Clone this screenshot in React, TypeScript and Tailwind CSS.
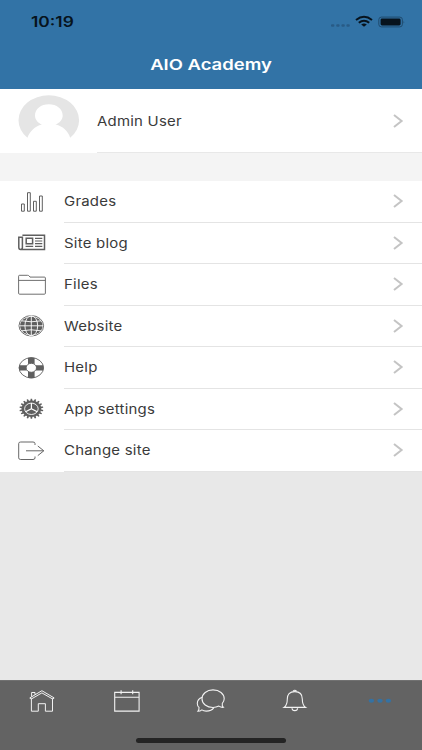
import type { ReactNode } from "react";

interface MenuItem {
  label: string;
  icon: ReactNode;
}

const labelCls =
  "inline-block origin-left scale-x-[1.15] whitespace-nowrap text-[13px] leading-5 " +
  "tracking-[0.2px] text-[#3a3a3a]";

const menuIconCls = "h-6 w-8 shrink-0 fill-none stroke-[#5f5f5f]";

const tabIconCls = "h-6 w-8 fill-none stroke-[#f2f2f2]";

const gearTeeth = Array.from({ length: 18 }, (_, i) => i * 20);

function Chevron() {
  return (
    <svg viewBox="0 0 12 16" className="h-4 w-3 shrink-0 fill-none stroke-[#c4c4c4]">
      <path d="M2 2 L9.6 8 L2 14" strokeWidth="2" />
    </svg>
  );
}

function Avatar() {
  return (
    <svg viewBox="0 0 62 50" className="h-[50px] w-[62px] shrink-0">
      <path
        d="M9.4 42.7 A30.3 24.8 0 1 1 52.2 42.7 C50 36.5 45.5 31.5 37.5 29.6 C41.5 28 44.7 24.8 44.7 20.5 C44.7 13.8 38.7 9.2 30.8 9.2 C23 9.2 17 13.8 17 20.5 C17 24.8 20 28 24 29.6 C16.5 31.5 12 36.5 9.4 42.7 Z"
        fill="#e5e5e5"
      />
    </svg>
  );
}

const menu: MenuItem[] = [
  {
    label: "Grades",
    icon: (
      <svg viewBox="0 0 32 24" className={menuIconCls}>
        <path
          d="M5.5 14H8.3V21.2H5.5Z M11.5 2.7H14.3V21.2H11.5Z M17.5 11.3H20.3V21.2H17.5Z M23.5 6H26.3V21.2H23.5Z"
          strokeWidth="1"
        />
      </svg>
    ),
  },
  {
    label: "Site blog",
    icon: (
      <svg viewBox="0 0 32 24" className={menuIconCls}>
        <path
          d="M6.4 4.2H28.5V18.4H4.5C3.2 18.4 2.8 17.6 2.8 16.6V6.2H6.4V16.5C6.4 17.8 5.6 18.4 4.8 18.4"
          strokeWidth="1.5"
        />
        <path d="M10.2 7.3H16.6V12.7H10.2Z" strokeWidth="1.5" />
        <path d="M19 7.3H26.3M19 10H26.3M19 12.7H26.3M9.6 15.4H17.2M19 15.4H26.3" strokeWidth="1.2" />
      </svg>
    ),
  },
  {
    label: "Files",
    icon: (
      <svg viewBox="0 0 32 24" className={menuIconCls}>
        <path
          d="M2.6 20.2V3.2Q2.6 2.3 3.6 2.3H11.6Q12.6 2.3 13.2 3L14 4.1H28.4Q29.4 4.1 29.4 5V20.2Q29.4 21.2 28.4 21.2H3.6Q2.6 21.2 2.6 20.2Z M2.6 7.4H29.4"
          strokeWidth="0.9"
        />
      </svg>
    ),
  },
  {
    label: "Website",
    icon: (
      <svg viewBox="0 0 32 24" className={menuIconCls}>
        <ellipse cx="15.3" cy="11.8" rx="12.3" ry="10.2" strokeWidth="0.9" />
        <ellipse cx="15.3" cy="11.8" rx="11.2" ry="9.1" fill="#5f5f5f" stroke="none" />
        <g stroke="#fff" strokeWidth="0.9">
          <path d="M15.3 2V21.6M3.5 11.8H27.1M5.5 6.8Q15.3 8.8 25.1 6.8M5.5 16.8Q15.3 14.8 25.1 16.8" />
          <ellipse cx="15.3" cy="11.8" rx="6.4" ry="10" />
        </g>
      </svg>
    ),
  },
  {
    label: "Help",
    icon: (
      <svg viewBox="0 0 32 24" className={menuIconCls}>
        <path
          d="M12 1.7Q15.3 1 18.6 1.7V8.1Q15.3 6.5 12 8.1Z M12 21.9Q15.3 22.6 18.6 21.9V15.5Q15.3 17.1 12 15.5Z M3.3 9.2Q2.4 11.8 3.3 14.4H10.8Q9.6 11.8 10.8 9.2Z M27.3 9.2Q28.2 11.8 27.3 14.4H19.8Q21 11.8 19.8 9.2Z"
          fill="#5f5f5f"
          stroke="none"
        />
        <ellipse cx="15.3" cy="11.8" rx="12.2" ry="10.1" strokeWidth="0.9" />
        <ellipse cx="15.3" cy="11.8" rx="5.2" ry="4.5" strokeWidth="0.9" />
      </svg>
    ),
  },
  {
    label: "App settings",
    icon: (
      <svg viewBox="0 0 32 24" className={menuIconCls}>
        <g transform="translate(15.4 11.8) scale(1.19 1)">
          {gearTeeth.map((deg) => (
            <path key={deg} d="M-0.9 -7.8L-0.6 -10H0.6L0.9 -7.8Z" transform={`rotate(${deg})`} fill="#5f5f5f" stroke="none" />
          ))}
          <circle r="8.3" fill="#5f5f5f" stroke="none" />
          <circle r="5.7" stroke="#fff" strokeWidth="0.8" />
          <path d="M0 0V-5.7M0 0L4.9 2.9M0 0L-4.9 2.9" stroke="#fff" strokeWidth="1" />
        </g>
      </svg>
    ),
  },
  {
    label: "Change site",
    icon: (
      <svg viewBox="0 0 32 24" className={menuIconCls}>
        <path
          d="M19 6V4.6Q19 3 17 3H4.7Q2.7 3 2.7 4.6V18.9Q2.7 20.5 4.7 20.5H17Q19 20.5 19 18.9V17.5M10 11.8H27.6M21.8 7L27.8 11.8L21.8 16.6"
          strokeWidth="0.95"
        />
      </svg>
    ),
  },
];

function StatusBar() {
  return (
    <div className="flex h-[43px] items-center justify-between pl-[31px] pr-[17px] text-[#07131d]">
      <span className="inline-block origin-left scale-x-[1.24] text-sm font-semibold leading-5">
        10:19
      </span>
      <svg viewBox="0 0 76 14" className="h-3.5 w-[76px]" fill="none">
        <g fill="#285b86">
          <rect x="2" y="9.2" width="3.4" height="2.6" rx="1" />
          <rect x="7.2" y="9.2" width="3.4" height="2.6" rx="1" />
          <rect x="12.4" y="9.2" width="3.4" height="2.6" rx="1" />
          <rect x="17.4" y="9.2" width="3.4" height="2.6" rx="1" />
        </g>
        <g transform="translate(0 -0.6)">
          <g stroke="currentColor" strokeWidth="2">
            <path d="M27 5.6Q35 -0.8 43 5.6" />
            <path d="M29.8 8.4Q35 4.2 40.2 8.4" />
          </g>
          <path d="M32.2 10.1Q35 8 37.8 10.1L35 12.4Z" fill="currentColor" />
          <rect x="49.8" y="2.7" width="23.6" height="9.8" rx="2.6" stroke="#1d4668" strokeWidth="0.9" />
          <rect x="51.6" y="4.2" width="20" height="6.8" rx="1.4" fill="currentColor" />
          <path d="M74.6 6.3Q76 7.7 74.6 9.1Z" fill="#1d4668" />
        </g>
      </svg>
    </div>
  );
}

function TabBar() {
  return (
    <nav className="h-[70px] border-t border-[#717171] bg-[#636363]">
      <div className="grid h-[41px] grid-cols-5 justify-items-center pt-2">
        <svg viewBox="0 0 32 24" className={tabIconCls}>
          <path
            d="M5.4 9.5V22.2H12.3V14.7H19.4V22.2H26.5V9.5M3.8 8.9L15.9 1.7L28.1 8.9L27 10.2L15.9 3.9L5 10.2Z M5.6 7.6V3.5H9V5.6"
            strokeWidth="1"
          />
        </svg>
        <svg viewBox="0 0 32 24" className={tabIconCls}>
          <path d="M3.7 3.4H28.1V22.1H3.7Z M3.7 8.3H28.1M10.1 1.3V5.3M21.7 1.3V5.3" strokeWidth="1.1" />
        </svg>
        <svg viewBox="0 0 32 24" className={tabIconCls}>
          <path
            d="M18 0.9C11.8 0.9 7 4.8 7 9.8C7 14.8 11.8 18.5 18 18.5C20.6 18.5 22.2 18 23.9 17.1C25.5 18.2 27 18.5 28.4 18.3C27.2 17.2 27 15.8 27.3 14.4C28.6 12.9 29.2 11.5 29.2 9.8C29.2 4.8 24.5 0.9 18 0.9Z"
            strokeWidth="1.1"
          />
          <path
            d="M7.3 8.2C4 9.3 2.3 11.7 2.3 14.4C2.3 16 2.9 17.4 4 18.4C4.2 20 3.7 21.3 2.9 22.3C4.5 22.3 5.8 21.8 6.9 20.9C8 21.7 9.7 22.1 11.2 22.1C14.3 22.1 17.4 20.9 18.8 18.6"
            strokeWidth="1.1"
          />
        </svg>
        <svg viewBox="0 0 32 24" className={tabIconCls}>
          <path
            d="M5 18.4C7.8 16.5 8.3 14 8.3 10C8.3 5.5 10.5 2.6 15.8 2.6C21.1 2.6 23.3 5.5 23.3 10C23.3 14 23.8 16.5 26.6 18.4Z"
            strokeWidth="1.1"
          />
          <path d="M14 2.3Q15.8 0.2 17.6 2.3M13 19.3C13.3 22.5 18.3 22.5 18.6 19.3" strokeWidth="1.2" />
        </svg>
        <svg viewBox="0 0 32 24" className="h-6 w-8 fill-[#3472a3]">
          <ellipse cx="7.4" cy="11.8" rx="2.7" ry="2" />
          <ellipse cx="16" cy="11.8" rx="2.7" ry="2" />
          <ellipse cx="24.4" cy="11.8" rx="2.7" ry="2" />
        </svg>
      </div>
      <div className="mx-auto mt-[16px] h-[4.5px] w-[150px] rounded-full bg-[#242424]" />
    </nav>
  );
}

export default function App() {
  return (
    <div className="flex h-[750px] w-[422px] flex-col overflow-hidden bg-[#e8e8e8] font-['Inter','Liberation_Sans',sans-serif]">
      <header className="h-[89px] bg-[#3273a6]">
        <StatusBar />
        <h1 className="scale-x-[1.23] text-center text-[15px] font-semibold leading-[43px] text-white">
          AIO Academy
        </h1>
      </header>

      <section className="flex h-16 bg-white pl-[18px]">
        <div className="w-[79px] pt-1.5">
          <Avatar />
        </div>
        <div className="flex flex-1 items-center justify-between border-b border-[#e8e8e8] pr-[18px]">
          <span className={labelCls}>Admin User</span>
          <Chevron />
        </div>
      </section>

      <div className="h-7 bg-[#f4f4f4]" />

      <ul className="bg-white">
        {menu.map((item) => (
          <li key={item.label} className="flex h-[41.5px] items-center pl-4">
            {item.icon}
            <div className="ml-[15.5px] flex h-full flex-1 items-center justify-between border-b border-[#e4e4e4] pr-[18px]">
              <span className={labelCls}>{item.label}</span>
              <Chevron />
            </div>
          </li>
        ))}
      </ul>

      <div className="flex-1" />
      <TabBar />
    </div>
  );
}
